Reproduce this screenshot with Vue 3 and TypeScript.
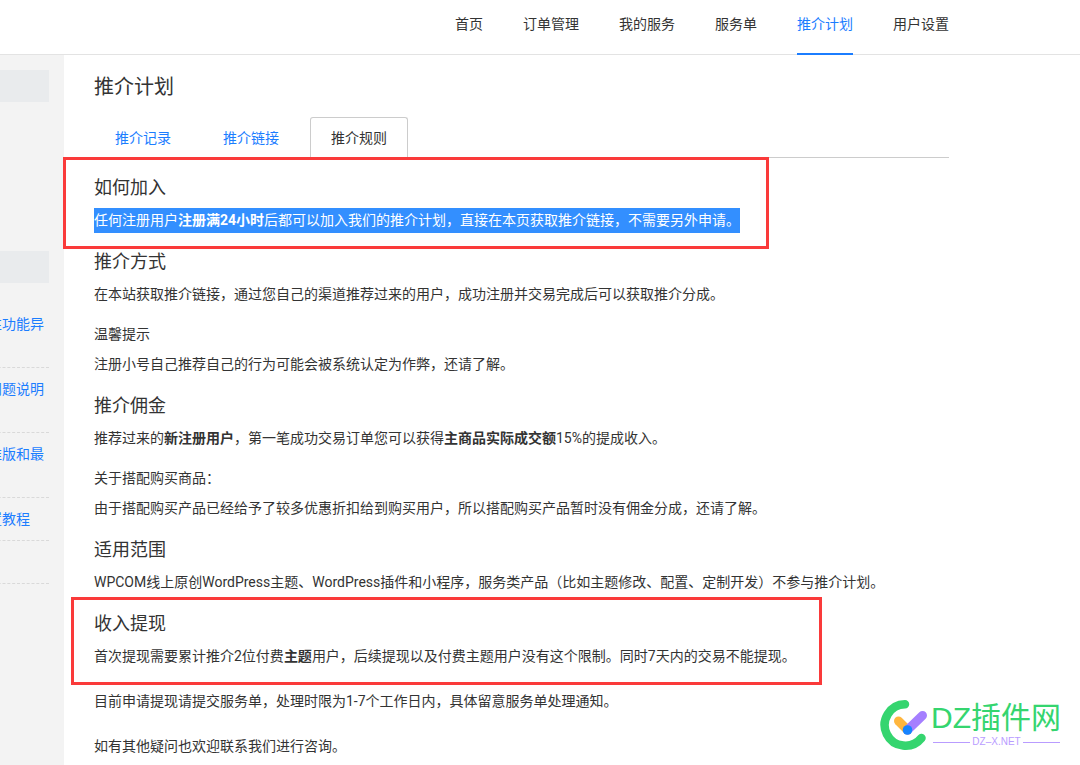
<script setup lang="ts">
interface NavItem {
  label: string
  active?: boolean
}

const navItems: NavItem[] = [
  { label: '首页' },
  { label: '订单管理' },
  { label: '我的服务' },
  { label: '服务单' },
  { label: '推介计划', active: true },
  { label: '用户设置' },
]

const tabs: NavItem[] = [
  { label: '推介记录' },
  { label: '推介链接' },
  { label: '推介规则', active: true },
]

interface SideLink {
  label: string
  tall?: boolean
}

const sideLinks: SideLink[] = [
  { label: '性功能异', tall: true },
  { label: '问题说明', tall: true },
  { label: '准版和最', tall: true },
  { label: '置教程' },
]
</script>

<template>
  <div class="page">
    <header class="header">
      <nav class="nav">
        <a
          v-for="item in navItems"
          :key="item.label"
          href="#"
          class="nav-link"
          :class="{ active: item.active }"
        >{{ item.label }}</a>
      </nav>
    </header>

    <div class="body">
      <aside class="sidebar">
        <div class="side-title first"></div>
        <div class="side-title"></div>
        <ul class="side-list">
          <li v-for="link in sideLinks" :key="link.label" :class="{ tall: link.tall }">
            <a href="#">{{ link.label }}</a>
          </li>
          <li></li>
        </ul>
      </aside>

      <main class="main">
        <h1>推介计划</h1>
        <div class="tabs" role="tablist">
          <button
            v-for="tab in tabs"
            :key="tab.label"
            type="button"
            role="tab"
            class="tab"
            :class="{ active: tab.active }"
            :aria-selected="tab.active ? 'true' : 'false'"
          >{{ tab.label }}</button>
        </div>

        <section class="boxed">
          <h2>如何加入</h2>
          <p><mark>任何注册用户<strong>注册满24小时</strong>后都可以加入我们的推介计划，直接在本页获取推介链接，不需要另外申请。</mark></p>
          <span class="frame frame-join"></span>
        </section>

        <section>
          <h2>推介方式</h2>
          <p>在本站获取推介链接，通过您自己的渠道推荐过来的用户，成功注册并交易完成后可以获取推介分成。</p>
          <h3>温馨提示</h3>
          <p>注册小号自己推荐自己的行为可能会被系统认定为作弊，还请了解。</p>
        </section>

        <section>
          <h2>推介佣金</h2>
          <p>推荐过来的<strong>新注册用户</strong>，第一笔成功交易订单您可以获得<strong>主商品实际成交额</strong>15%的提成收入。</p>
          <h3>关于搭配购买商品：</h3>
          <p>由于搭配购买产品已经给予了较多优惠折扣给到购买用户，所以搭配购买产品暂时没有佣金分成，还请了解。</p>
        </section>

        <section>
          <h2>适用范围</h2>
          <p>WPCOM线上原创WordPress主题、WordPress插件和小程序，服务类产品（比如主题修改、配置、定制开发）不参与推介计划。</p>
        </section>

        <section class="boxed">
          <h2>收入提现</h2>
          <p>首次提现需要累计推介2位付费<strong>主题</strong>用户，后续提现以及付费主题用户没有这个限制。同时7天内的交易不能提现。</p>
          <span class="frame frame-cash"></span>
        </section>

        <p>目前申请提现请提交服务单，处理时限为1-7个工作日内，具体留意服务单处理通知。</p>
        <p>如有其他疑问也欢迎联系我们进行咨询。</p>
      </main>
    </div>

    <div class="watermark">
      <svg class="mark-icon" viewBox="0 0 48 50" aria-hidden="true">
        <path d="M25 4.300A20.700 20.700 0 1 0 41.500 38" fill="none" stroke="#35d56f" stroke-width="8.500" stroke-linecap="round" />
        <path d="M18.500 21L27.500 30" stroke="#ffb63e" stroke-width="9" stroke-linecap="round" />
        <path d="M42.500 15.500L27.500 30" stroke="#a57fff" stroke-width="9" stroke-linecap="round" />
        <circle cx="27.500" cy="30" r="4.800" fill="#1684ff" />
      </svg>
      <div class="mark-text">
        <span class="mark-name">DZ插件网</span>
        <span class="mark-site">DZ–X.NET</span>
      </div>
    </div>
  </div>
</template>

<style>
body {
  margin: 0;
  overflow: hidden;
}
</style>

<style scoped>
.page {
  position: relative;
  display: flex;
  flex-direction: column;
  height: 100vh;
  overflow: hidden;
  background: #fff;
  color: #333;
  font-family: Roboto, "Noto Sans CJK SC", sans-serif;
  font-size: 14px;
}

a {
  color: #1b7dff;
  text-decoration: none;
}

.header {
  flex: none;
  box-sizing: border-box;
  height: 55px;
  padding-right: 131px;
  border-bottom: 1px solid #e3e3e3;
}

.nav {
  display: flex;
  justify-content: flex-end;
  gap: 40px;
}

.nav-link {
  box-sizing: border-box;
  height: 55px;
  line-height: 48px;
  color: #333;
}

.nav-link.active {
  color: #1b7dff;
  border-bottom: 2px solid #1b7dff;
}

.body {
  display: flex;
  flex: 1;
  min-height: 0;
}

.sidebar {
  flex: none;
  box-sizing: border-box;
  width: 64px;
  padding: 15px 15px 0 0;
  background: #f3f3f3;
  overflow: hidden;
}

.side-title {
  height: 32px;
  background: #e9ebed;
}

.side-title.first {
  margin-bottom: 149px;
}

.side-list {
  margin: 20px 0 0 -12px;
  padding: 0;
  list-style: none;
}

.side-list li {
  box-sizing: border-box;
  height: 43px;
  padding: 10px 0;
  border-bottom: 1px dashed #d9d9d9;
  line-height: 22px;
  white-space: nowrap;
}

.side-list li.tall {
  height: 65px;
}

.main {
  flex: 1;
  min-width: 0;
  padding: 17px 131px 0 30px;
}

h1,
h2,
h3 {
  margin: 0;
  font-weight: 400;
}

h1 {
  margin-bottom: 15px;
  font-size: 20px;
  line-height: 30px;
}

.tabs {
  display: flex;
  gap: 10px;
  height: 40px;
  margin-bottom: 18px;
  border-bottom: 1px solid #ccc;
}

.tab {
  box-sizing: border-box;
  height: 41px;
  padding: 0 20px 2px;
  border: 1px solid transparent;
  border-radius: 3px 3px 0 0;
  background: none;
  color: #1b7dff;
  font: inherit;
}

.tab.active {
  border-color: #ccc;
  border-bottom-color: #fff;
  background: #fff;
  color: #333;
}

h2 {
  margin-bottom: 5px;
  font-size: 18px;
  line-height: 24px;
}

h3 {
  margin-bottom: 5px;
  font-size: 14px;
  line-height: 20px;
}

p {
  margin: 0 0 15px;
  line-height: 30px;
  white-space: nowrap;
}

mark {
  display: inline-block;
  background: #338fff;
  color: #fff;
  line-height: 25px;
}

.boxed {
  position: relative;
}

.frame {
  position: absolute;
  box-sizing: border-box;
  border: 3px solid #fa3a3a;
  pointer-events: none;
}

.frame-join {
  top: -19px;
  left: -31px;
  width: 706px;
  height: 92px;
}

.frame-cash {
  top: -15px;
  left: -23px;
  width: 751px;
  height: 88px;
}

.watermark {
  position: absolute;
  right: 19px;
  bottom: 15px;
  display: flex;
  gap: 3px;
}

.mark-icon {
  width: 48px;
  height: 50px;
}

.mark-text {
  display: flex;
  flex-direction: column;
}

.mark-name {
  color: #35d56f;
  font-family: "Liberation Sans", "Noto Sans CJK SC", sans-serif;
  font-size: 30px;
  line-height: 36px;
}

.mark-site {
  display: flex;
  align-items: center;
  gap: 2px;
  padding: 0 1px 0 2px;
  color: #b99cff;
  font-family: "Liberation Sans", sans-serif;
  font-size: 10px;
  line-height: 12px;
}

.mark-site::before,
.mark-site::after {
  content: "";
  flex: 1;
  height: 1px;
  background: #b99cff;
}
</style>
